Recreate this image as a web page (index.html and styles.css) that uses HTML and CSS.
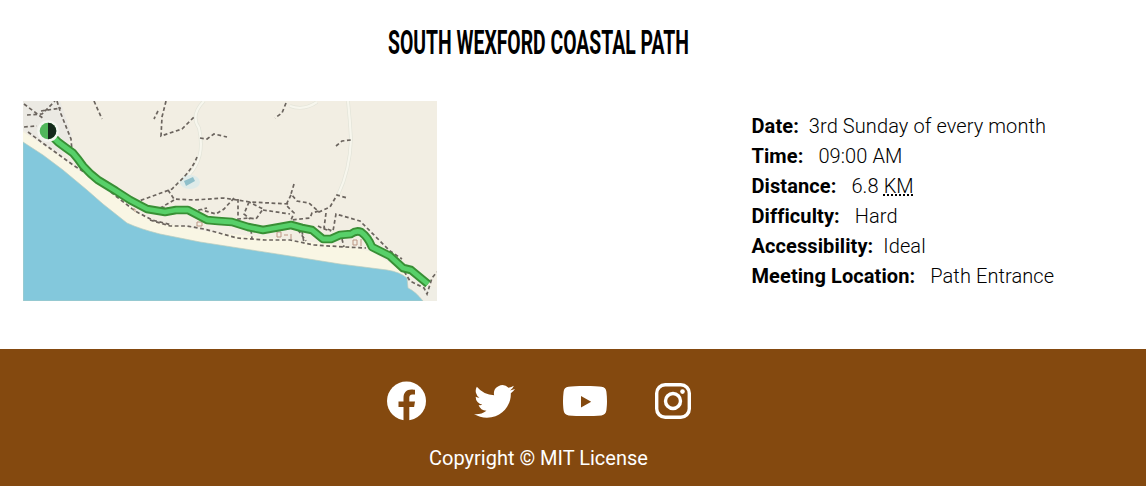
FILE: index.html
```html
<!DOCTYPE html>
<html lang="en">
<head>
<meta charset="utf-8">
<title>South Wexford Coastal Path</title>
<link rel="stylesheet" href="styles.css">
</head>
<body>
<main class="walk">
  <h2 class="walk-title"><svg class="title-art" width="320" height="48" viewBox="0 0 320 48"><text x="0" y="31" textLength="301" lengthAdjust="spacingAndGlyphs">SOUTH WEXFORD COASTAL PATH</text></svg></h2>
  <div class="walk-body">
    <svg class="map" width="414" height="200" viewBox="23 101 414 200" role="img" aria-label="Route map">
      <rect x="23" y="101" width="414" height="200" fill="#f2eee3"/>
      <path fill="#ebe9e3" d="M23 101H60L72 135 62 155 23 130Z"/>
      <path fill="#f9f6e4" d="M23 132 60 156 105 190 150 220 210 232 290 240 345 245 372 252 400 269 421 284 437 301H23Z"/>
      <path fill="#f0eee5" d="M406 274 428 286 437 288V301H415L407 288Z"/>
      <path fill="#83c8dc" stroke="#b9cdbf" stroke-width=".7" d="M23 142 43 155 63 170 87 190 103 204 127 223Q140 229 160 234L200 242 290 256 340 264 387 270Q400 272 407 278L408 288Q415 291 423 301H23Z"/>
      <g class="roads">
        <path class="road-edge" d="M204 101Q190 115 199 128 204 150 196 165 190 177 177 184M290 106Q304 111 317 102M348 101Q350 120 351 139 350 170 338 195"/>
        <path class="road" d="M204 101Q190 115 199 128 204 150 196 165 190 177 177 184M290 106Q304 111 317 102M348 101Q350 120 351 139 350 170 338 195"/>
      </g>
      <ellipse cx="190" cy="182" rx="10" ry="7" fill="#dfebe9"/>
      <path fill="#8fbfca" d="M184 181 193 177 195 181 186 186Z"/>
      <g class="paths">
        <path d="M24 104 44 119M27 115 42 114 55 101M41 111 61 108M57 101 61 114 71 139 72 151M24 127 37 126M94 101 102 119M28 132 44 144 73 165 95 179 117 197 135 211 152 220 172 225M158 111 154 119M166 101 162 117 161 136 182 129 194 117M200 138 207 139 214 134 227 137M197 157Q192 170 178 183L172 189 150 197 139 201M286 103 282 113 275 118M336 146 342 141 351 140"/>
        <path d="M168 190 174 199 194 200 224 198 250 202 289 204M174 200 162 207 187 213 207 208M234 198 224 209 216 214 202 210M238 199 238 219 249 218 256 219 263 209 249 202M263 210 290 214M249 202 244 214 250 219M294 184 291 194 297 201 309 203 319 212 330 207 337 195 347 198M291 195 286 205 294 213 291 220 310 218 312 213 319 211M326 213 324 228 333 231 336 214 360 221 375 236 390 251 402 259M318 226 324 229 331 231"/>
        <path d="M150 220 170 226 187 226 204 229 219 233 237 238 265 240 290 240 314 245 345 247 366 248M251 230 252 239M298 230 306 241M302 231 304 243M342 239 344 247M401 266 410 281 424 288 427 294 432 278 437 272"/>
      </g>
      <path class="shop" d="M197 222h5v4h-5zM277 232h4v5h-4zM284 235h4M291 234v5M353 240h4v5h-4zM361 239v7M132 209h3v3"/>
      <g class="trail">
        <path class="trail-edge" d="M48 132 58 142Q66 148 73 153 79 160 83 166 90 174 98 180L116 191 130 200 147 209 165 212 176 210 188 210 207 220 218 221 232 222 248 227 263 230 280 227 291 225 302 228 312 230 323 239 331 239 340 235 351 234Q356 230 361 232 368 237 372 247L390 256 403 268 411 270 428 284"/>
        <path class="trail-core" d="M48 132 58 142Q66 148 73 153 79 160 83 166 90 174 98 180L116 191 130 200 147 209 165 212 176 210 188 210 207 220 218 221 232 222 248 227 263 230 280 227 291 225 302 228 312 230 323 239 331 239 340 235 351 234Q356 230 361 232 368 237 372 247L390 256 403 268 411 270 428 284"/>
      </g>
      <circle cx="48" cy="131" r="10.800" fill="#f4f5f0"/>
      <circle cx="48" cy="131" r="8.300" fill="#50b75b"/>
      <path d="M48 122.700A8.300 8.300 0 0 1 48 139.300Z" fill="#14291b"/>
    </svg>
    <div class="details">
      <div class="row"><b>Date:</b><span class="near">3rd Sunday of every month</span></div>
      <div class="row"><b>Time:</b><span>09:00 AM</span></div>
      <div class="row"><b>Distance:</b><span>6.8 <abbr title="Kilometres">KM</abbr></span></div>
      <div class="row"><b>Difficulty:</b><span>Hard</span></div>
      <div class="row"><b>Accessibility:</b><span class="near">Ideal</span></div>
      <div class="row"><b>Meeting Location:</b><span>Path Entrance</span></div>
    </div>
  </div>
</main>
<footer class="footer">
  <div class="social">
    <svg width="39" height="40" viewBox="0 0 39 40"><circle cx="19.500" cy="20" r="19.500"/><path class="cut" d="M16.500 40V26H11.500V20.500H16.500V17C16.500 11.500 19.500 8.500 24.300 8.500 26.200 8.500 28 8.800 28 8.800V13.500H25.500C23 13.500 22.300 15 22.300 16.600V20.500H28L27.100 26H22.300V40Z"/></svg>
    <svg width="41" height="40" viewBox="0 0 16 16" preserveAspectRatio="none"><path d="M5.026 14.700c6.038 0 9.341-5.003 9.341-9.334 0-.140 0-.282-.006-.422A6.685 6.685 0 0 0 16 3.242a6.658 6.658 0 0 1-1.889.518 3.301 3.301 0 0 0 1.447-1.817 6.533 6.533 0 0 1-2.087.793A3.286 3.286 0 0 0 7.875 5.730a9.325 9.325 0 0 1-6.767-3.429 3.289 3.289 0 0 0 1.018 4.382A3.323 3.323 0 0 1 .640 6.275v.045a3.288 3.288 0 0 0 2.632 3.218 3.203 3.203 0 0 1-.865.115 3.230 3.230 0 0 1-.614-.057 3.283 3.283 0 0 0 3.067 2.277A6.588 6.588 0 0 1 .780 13.280a6.320 6.320 0 0 1-.780-.045A9.344 9.344 0 0 0 5.026 14.700z"/></svg>
    <svg width="44" height="40" viewBox="0 0 44 40"><path fill-rule="evenodd" d="M22 5c8 0 13.500.300 16.500.700 3 .400 4.600 2.200 4.900 5C43.800 14 44 17 44 20.300s-.200 6-.600 9c-.300 3-2 4.800-5 5.100C34 35 28 35 22 35s-12 0-16.400-.600c-3-.300-4.700-2.100-5-5.100C.200 26.300 0 23.600 0 20.300S.200 14 .600 10.700c.300-2.800 1.900-4.600 4.900-5C8.500 5.300 14 5 22 5ZM18 15V26.600L28.200 20.800Z"/></svg>
    <svg class="insta" width="36" height="36" viewBox="0 0 36 36"><rect x="1.700" y="1.700" width="32.600" height="32.600" rx="8.500"/><circle cx="18" cy="18" r="7.500"/><circle class="dot" cx="27.500" cy="8.600" r="2.300"/></svg>
  </div>
  <p class="copyright">Copyright © MIT License</p>
</footer>
</body>
</html>
```
FILE: styles.css
```css
* { box-sizing: border-box; }
body { margin: 0; background: #fff; color: #000; font: 20px/30px Roboto, sans-serif; }
.walk { height: 349px; padding: 23px 0 0 23px; }
.walk-title { margin: 0 0 30px 365px; height: 48px; font-size: 32px; }
.title-art { display: block; overflow: visible; }
.title-art text { font: 700 32.500px Roboto, sans-serif; }
.walk-body { display: flex; gap: 314.500px; }
.map { display: block; flex: none; overflow: hidden; }
.details { padding-top: 10px; font-weight: 300; white-space: nowrap; }
.row { height: 30px; letter-spacing: .090px; }
.row b { font-weight: 700; }
.row span { margin-left: 15px; }
.row .near { margin-left: 10px; }
abbr { text-decoration: underline dotted; }
.road, .road-edge { fill: none; stroke: #f7f6ed; stroke-width: 2.200; }
.road-edge { stroke: #e3e4d9; stroke-width: 3.600; }
.paths { fill: none; stroke: #6b645e; stroke-width: 1.700; stroke-dasharray: 3.800 2.600; }
.shop { fill: none; stroke: #bb9683; stroke-width: 1; }
.trail { fill: none; stroke-linejoin: round; }
.trail-edge { stroke: #388f35; stroke-width: 8.600; }
.trail-core { stroke: #57d069; stroke-width: 4.800; }
.footer { height: 137px; padding-top: 32px; background: #84490f; color: #fff; }
.social { display: flex; align-items: center; height: 40px; margin-left: 387px; gap: 48px; fill: #fff; }
.cut { fill: #84490f; }
.social .insta { fill: none; stroke: #fff; stroke-width: 3.400; }
.social .insta .dot { fill: #fff; stroke: none; }
.copyright { margin: 22px 0 0 429px; }
```
